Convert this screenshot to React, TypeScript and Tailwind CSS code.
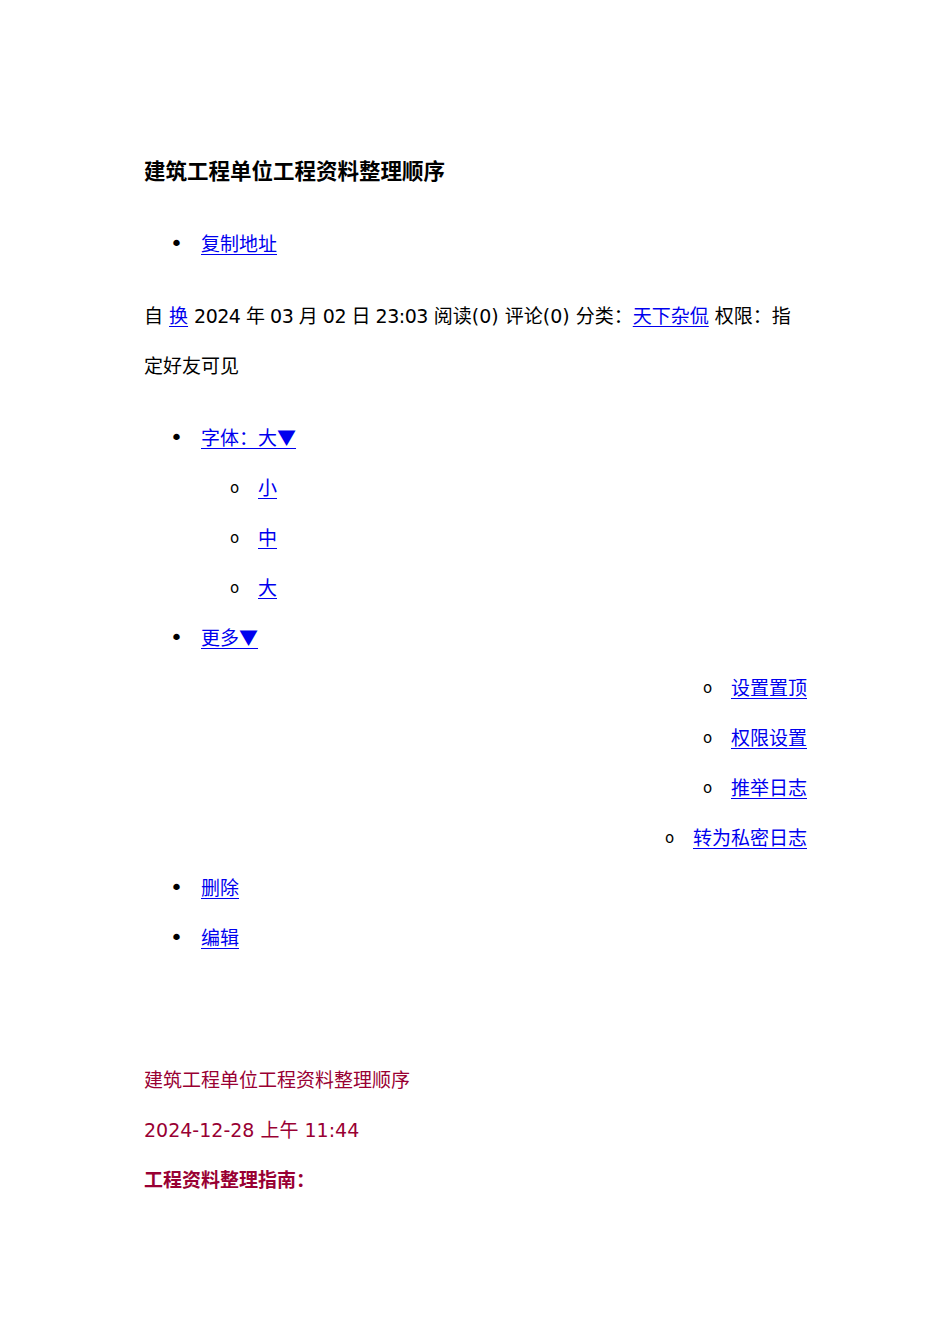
const font = { fontFamily: '"DejaVu Sans", "Noto Sans CJK SC", sans-serif' };

function Link({ children }: { children: React.ReactNode }) {
  return <a href="#" className="text-[#0000ee] underline underline-offset-[3px]">{children}</a>;
}

function Tri() {
  return <span className="font-['Noto_Sans_CJK_SC']">▼</span>;
}

function Bullet({ children }: { children: React.ReactNode }) {
  return (
    <div className="flex h-[50px] items-center">
      <span className="w-[57px] pl-[26px] text-[22px] leading-none text-black">•</span>
      {children}
    </div>
  );
}

function SubItem({ children }: { children: React.ReactNode }) {
  return (
    <div className="flex h-[50px] items-center pl-[86px]">
      <span className="w-[28px] text-[15px] text-black">o</span>
      {children}
    </div>
  );
}

function RightItem({ children }: { children: React.ReactNode }) {
  return (
    <div className="flex h-[50px] items-center justify-end">
      <span className="w-[28px] text-[15px] text-black">o</span>
      {children}
    </div>
  );
}

export default function App() {
  return (
    <div className="min-h-[1344px] w-[950px] bg-white" style={font}>
      <div className="ml-[144px] w-[663px] pt-[147px] text-[19px] text-black">
        <h1 className="flex h-[50px] items-center text-[21.5px] font-bold">建筑工程单位工程资料整理顺序</h1>

        <div className="mt-[22px]">
          <Bullet><Link>复制地址</Link></Bullet>
        </div>

        <div className="mt-[22px]">
          <div className="h-[50px] whitespace-pre leading-[50px]">
            自 <Link>换</Link> <span className="tracking-[-0.5px]">2024 年 03 月 02 日 23:03</span> 阅读(0) 评论(0) 分类：<Link>天下杂侃</Link> 权限：指
          </div>
          <div className="h-[50px] leading-[50px]">定好友可见</div>
        </div>

        <div className="mt-[22px]">
          <Bullet><Link>字体：大<Tri /></Link></Bullet>
          <SubItem><Link>小</Link></SubItem>
          <SubItem><Link>中</Link></SubItem>
          <SubItem><Link>大</Link></SubItem>
          <Bullet><Link>更多<Tri /></Link></Bullet>
          <RightItem><Link>设置置顶</Link></RightItem>
          <RightItem><Link>权限设置</Link></RightItem>
          <RightItem><Link>推举日志</Link></RightItem>
          <RightItem><Link>转为私密日志</Link></RightItem>
          <Bullet><Link>删除</Link></Bullet>
          <Bullet><Link>编辑</Link></Bullet>
        </div>

        <div className="mt-[92px] text-[#990033]">
          <div className="flex h-[50px] items-center">建筑工程单位工程资料整理顺序</div>
          <div className="flex h-[50px] items-center">2024-12-28 上午 11:44</div>
          <div className="flex h-[50px] items-center font-bold">工程资料整理指南：</div>
        </div>
      </div>
    </div>
  );
}
